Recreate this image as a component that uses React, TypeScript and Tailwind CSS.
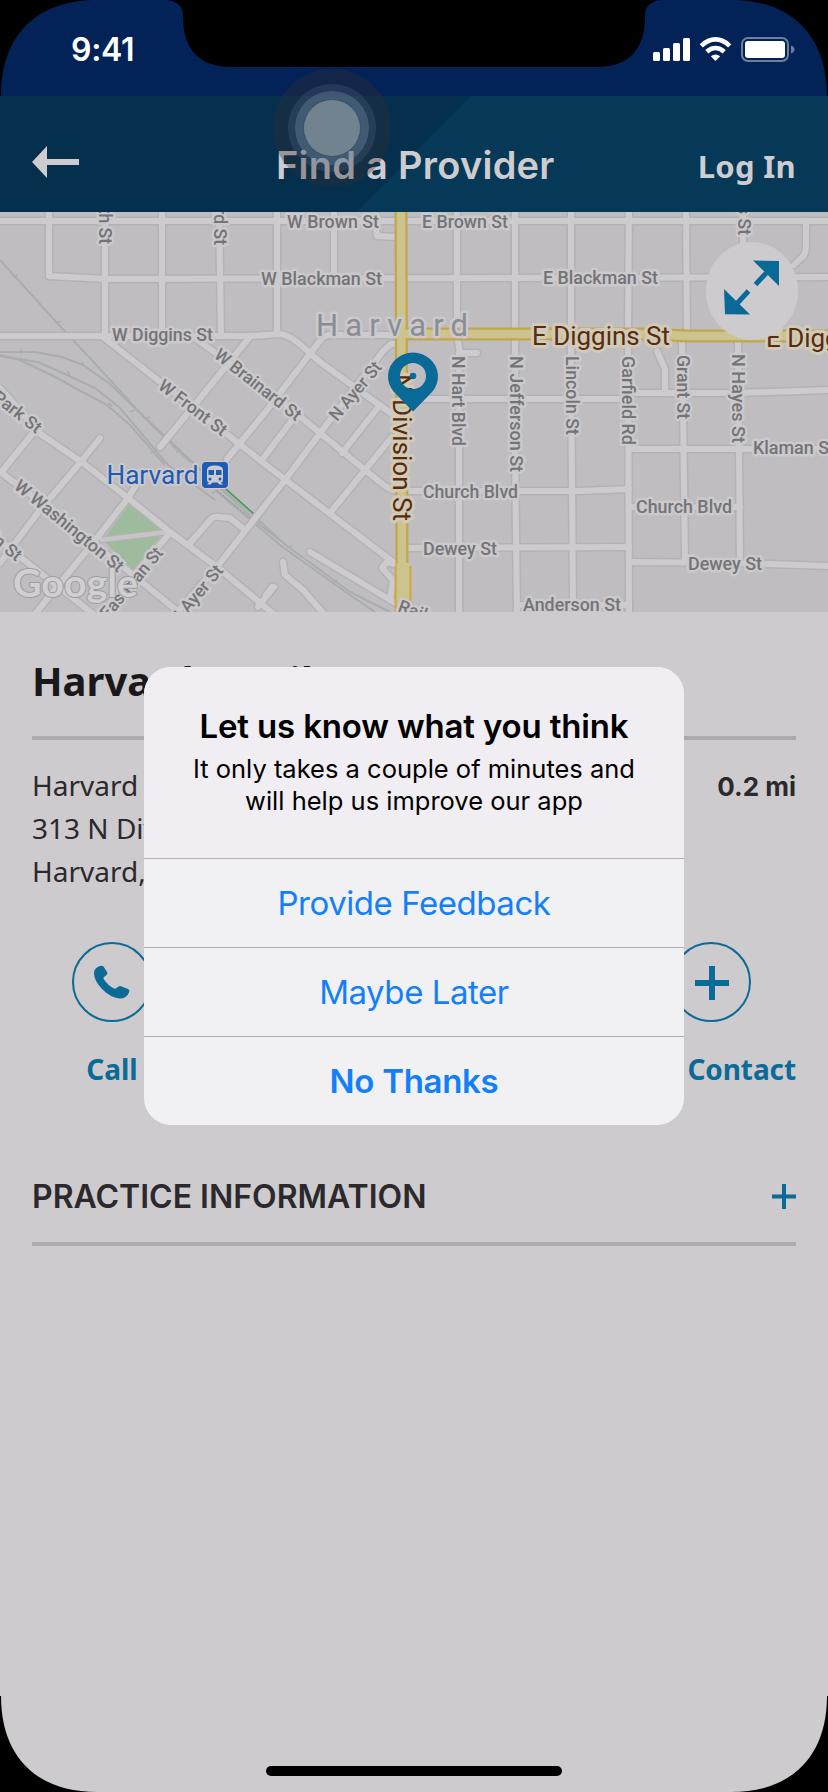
import React from "react";

const UI = "font-[Inter,'Liberation_Sans',sans-serif]";
const NOTO = "font-['Noto_Sans','Open_Sans',sans-serif]";

const ROADS = [
  "M0 221H828",
  "M49 205V276L107 279L828 277",
  "M105 205V336",
  "M162 205V336",
  "M219 205L221 336",
  "M277 205V334",
  "M334 205V277",
  "M0 336H250L280 334Q290 335 303 347L320 362L392 414",
  "M103 337L270 468L397 565",
  "M195 338L280 400L365 470L385 486Q392 491 402 491H580L629 489",
  "M402 335H328Q323 336 319 342L267 410L227 459",
  "M249 338L197 402L160 447",
  "M397 344H391L384 350L330 420L285 480L220 563L172 618",
  "M292 420L262 460",
  "M380 405L342 453",
  "M392 437L330 513",
  "M0 388L42 435L83 463L128 498L170 532L217 567L276 616",
  "M0 472L30 494L127 570L180 613",
  "M0 540L20 557L92 613",
  "M33 433L3 470",
  "M100 438L80 463L40 510L0 563",
  "M138 482L128 498L97 538L35 614",
  "M170 533L100 615",
  "M190 543L211 519Q214 516 219 517L230 518L245 530",
  "M274 587L258 607",
  "M283 562L285 575L303 590L324 614",
  "M272 587L266 595",
  "M310 552L402 607",
  "M397 565L387 562L382 568L393 580L390 600",
  "M375 222L377 236L397 237",
  "M457 205V335L460 353H477",
  "M459 353V614",
  "M515 205V450L517 614",
  "M571 205V360L573 605",
  "M629 205L628 335L629 614",
  "M686 205L687 335",
  "M682 342L683 405L685 562",
  "M743 205V250",
  "M738 342L740 562",
  "M806 221V246Q806 255 801 258L794 265",
  "M422 399H629",
  "M636 393H735L828 390",
  "M657 351L665 369V393",
  "M629 449H828",
  "M629 507H740",
  "M402 548L629 547",
  "M629 562L740 563L828 566",
  "M520 605H629",
];

const RAILS = [
  "M0 260L58 324L102 371L142 415L195 465L260 525L290 548L350 592L390 612",
  "M0 352H35L62 357L83 365L110 384L135 408L190 462",
  "M0 356L38 362L67 375L95 388L120 408L168 465L215 500",
  "M0 355L20 360L55 377L107 405L130 425L165 465",
  "M137 410L192 462L250 512L280 540",
  "M215 490L280 545L340 588L375 612",
];

const TICKS = "M13 277l5-2M56 323l5-2M21 349v5M82 362l3 5M52 374l4 4M108 403l4 3M67 371l3 4M130 412l5-2M145 419l5-2M150 453l6-2M176 452l5-2M288 548l4-3M332 583l5-3M212 493l5-2";

type Label = { t: string; x: number; y: number; len?: number; r?: number; end?: boolean };

const LABELS: Label[] = [
  { t: "W Diggins St", x: 112, y: 341, len: 101 },
  { t: "W Brown St", x: 287, y: 228, len: 92 },
  { t: "E Brown St", x: 422, y: 228, len: 86 },
  { t: "W Blackman St", x: 261, y: 285, len: 121 },
  { t: "E Blackman St", x: 543, y: 284, len: 115 },
  { t: "th St", x: 99, y: 244, r: 90, end: true },
  { t: "rd St", x: 214, y: 245, r: 90, end: true },
  { t: "s St", x: 738, y: 235, r: 90, end: true },
  { t: "N Hart Blvd", x: 452, y: 356, len: 90, r: 90 },
  { t: "N Jefferson St", x: 510, y: 356, len: 116, r: 90 },
  { t: "Lincoln St", x: 566, y: 356, len: 79, r: 90 },
  { t: "Garfield Rd", x: 622, y: 356, len: 89, r: 90 },
  { t: "Grant St", x: 677, y: 355, len: 64, r: 90 },
  { t: "N Hayes St", x: 732, y: 354, len: 89, r: 90 },
  { t: "Park St", x: 36, y: 434, r: 38, end: true },
  { t: "W Front St", x: 157, y: 388, len: 81, r: 37 },
  { t: "W Brainard St", x: 213, y: 357, len: 105, r: 38 },
  { t: "N Ayer St", x: 337, y: 422, len: 71, r: -50 },
  { t: "W Washington St", x: 13, y: 488, len: 135, r: 39 },
  { t: "Main St", x: 16, y: 562, r: 39, end: true },
  { t: "Eastman St", x: 108, y: 620, len: 87, r: -50 },
  { t: "N Ayer St", x: 224, y: 571, r: -50, end: true },
  { t: "Railroad St", x: 397, y: 611, r: 20 },
  { t: "Church Blvd", x: 423, y: 498, len: 95 },
  { t: "Church Blvd", x: 636, y: 513, len: 96 },
  { t: "Dewey St", x: 423, y: 555, len: 74 },
  { t: "Dewey St", x: 688, y: 570, len: 74 },
  { t: "Klaman St", x: 753, y: 454, len: 82 },
  { t: "Anderson St", x: 523, y: 611, len: 98 },
];

function StreetMap() {
  return (
    <svg width="828" height="400" viewBox="0 212 828 400" className="block shrink-0 font-[Roboto,sans-serif]">
      <rect y="212" width="828" height="400" fill="#bfbdc0" />
      <g fill="none" stroke="#abacb0" strokeWidth="2">
        {RAILS.map((d) => <path key={d} d={d} />)}
        <path d={TICKS} strokeWidth="1.5" />
      </g>
      <path d="M226 489L254 514" stroke="#3f9a53" strokeWidth="1.5" />
      <path d="M217 490L250 518" stroke="#6f8c78" strokeWidth="1" strokeDasharray="1 1" />
      <path d="M130 503L165 530L133 570L103 540Z" fill="#9fbb9e" />
      <path d="M100 540L168 532" stroke="#b3b1b4" strokeWidth="7" />
      <g fill="none" stroke="#b3b2b5" strokeWidth="9" strokeLinecap="round" strokeLinejoin="round">
        {ROADS.map((d) => <path key={d} d={d} />)}
      </g>
      <path d="M100 540L168 532" stroke="#c6c4c7" strokeWidth="4.5" />
      <g fill="none" stroke="#cdcbce" strokeWidth="6" strokeLinecap="round" strokeLinejoin="round">
        {ROADS.map((d) => <path key={d} d={d} />)}
      </g>
      <g fill="none">
        <path d="M402 334H640L690 336H828M401 205L402 568" stroke="#c3a550" strokeWidth="13" />
        <path d="M403 566V614" stroke="#c9aa4c" strokeWidth="17" />
        <path d="M402 334H640L690 336H828M401 205L402 568" stroke="#ccc48c" strokeWidth="8.5" />
        <path d="M403 563V614" stroke="#ccc48c" strokeWidth="12.5" />
      </g>
      <g fontSize="17.500" fontWeight="500" fill="#747477" stroke="#cbc9cc" strokeWidth="5" strokeLinejoin="round" style={{ paintOrder: "stroke" }}>
        {LABELS.map((l, i) => (
          <text
            key={i}
            x={l.x}
            y={l.y}
            textLength={l.len}
            lengthAdjust="spacingAndGlyphs"
            textAnchor={l.end ? "end" : "start"}
            transform={l.r ? `rotate(${l.r} ${l.x} ${l.y})` : undefined}
          >
            {l.t}
          </text>
        ))}
      </g>
      <text x="316" y="336" fontSize="31" textLength="152" fill="#8a8d94" stroke="#cbc9cc" strokeWidth="5" strokeLinejoin="round" style={{ paintOrder: "stroke" }}>Harvard</text>
      <g fontSize="25" fill="#5b2b0d" stroke="#d0cab8" strokeWidth="6" strokeLinejoin="round" style={{ paintOrder: "stroke" }}>
        <text x="532" y="344.500" textLength="138" lengthAdjust="spacingAndGlyphs">E Diggins St</text>
        <text x="766" y="346.500" textLength="138" lengthAdjust="spacingAndGlyphs">E Diggins St</text>
        <text x="393" y="374" textLength="147" lengthAdjust="spacingAndGlyphs" transform="rotate(90 393 374)">N Division St</text>
      </g>
      <text x="106.500" y="483.500" fontSize="25" textLength="92" lengthAdjust="spacingAndGlyphs" fill="#1e5bb4" stroke="#cbc9cc" strokeWidth="4" strokeLinejoin="round" style={{ paintOrder: "stroke" }}>Harvard</text>
      <g>
        <rect x="201" y="461" width="28" height="28" rx="5" fill="#cdcbce" />
        <rect x="202" y="462" width="26" height="26" rx="4" fill="#1e5bb4" />
        <path d="M207 470Q207 465.500 215 465.500T223 470V480Q223 482 221 482.500L223 484.500H219.500L217.500 482.500H212.500L210.500 484.500H207L209 482.500Q207 482 207 480Z" fill="#cdcbce" />
        <path d="M208.500 470H214V475H208.500ZM216 470H221.500V475H216Z" fill="#1e5bb4" />
        <circle cx="210" cy="479" r="1.500" fill="#1e5bb4" />
        <circle cx="220" cy="479" r="1.500" fill="#1e5bb4" />
      </g>
      <text x="13" y="597" textLength="125" lengthAdjust="spacingAndGlyphs" fontSize="39" fontWeight="700" fill="#d1cfd2" stroke="#9e9da0" strokeWidth="2" strokeLinejoin="round" style={{ paintOrder: "stroke" }} className="font-[Lato,sans-serif]">Google</text>
      <path
        fillRule="evenodd"
        fill="#096a97"
        d="M413 411.500L393.500 391.500A25 24 0 1 1 432.500 391.500ZM413 363A13 13 0 1 0 413 389A13 13 0 1 0 413 363Z"
      />
      <circle cx="413" cy="376" r="3.300" fill="#096a97" />
      <ellipse cx="752" cy="291" rx="46" ry="49" fill="#cdcbce" />
      <g fill="#096a97">
        <path d="M753 260.500L779 261V286Z" />
        <path d="M724 289L725 314.300L750 314.500Z" />
        <path d="M755.500 284.500L771 268M737 303.500L748.500 291" stroke="#096a97" strokeWidth="5" />
      </g>
    </svg>
  );
}

function StatusBar() {
  return (
    <div className="flex h-24 shrink-0 items-start justify-between bg-[#032358] pt-[30px] pr-[33px] pl-[71px] text-white">
      <span className={`${UI} text-[32px] leading-10 font-semibold tracking-[-0.3px]`}>9:41</span>
      <svg width="144" height="28" viewBox="651 35 144 28" className="mt-[5px]" fill="#fff">
        <rect x="653" y="52" width="7" height="9" rx="1.500" />
        <rect x="663" y="48" width="7" height="13" rx="1.500" />
        <rect x="673" y="43" width="7" height="18" rx="1.500" />
        <rect x="683" y="38" width="7" height="23" rx="1.500" />
        <g fill="none" stroke="#fff" strokeWidth="4.600">
          <path d="M701.300 45.800Q708 39.400 715.500 39.400T729.700 45.800" />
          <path d="M706.800 51.700Q710.800 48 715.500 48T724.200 51.700" />
        </g>
        <path d="M710.800 56.300Q715.500 52.800 720.200 56.300L715.500 61Z" />
        <rect x="742" y="38" width="46" height="23" rx="6" fill="none" stroke="#fff" strokeOpacity=".42" strokeWidth="2" />
        <rect x="745" y="41" width="40" height="17" rx="3" />
        <path d="M791 45.500Q794.500 47 794.500 49.500T791 53.500Z" fillOpacity=".42" />
      </svg>
    </div>
  );
}

function Header() {
  return (
    <header className="relative flex h-[116px] shrink-0 items-center justify-between bg-[linear-gradient(134.5deg,#042f4d_50%,#063857_50%)] pt-6 pr-8 pl-8 text-[#cfccd0]">
      <svg width="48" height="34" viewBox="0 0 48 34" className="-mt-2" fill="#cfccd0">
        <path d="M0 17L15 1V14H47V20H15V33Z" />
      </svg>
      <h1 className={`${UI} -mt-[2px] ml-[53px] text-[38px] leading-[46px] font-semibold tracking-[0.25px]`}>Find a Provider</h1>
      <span className={`${NOTO} text-[31px] leading-10 font-bold tracking-[0.3px]`}>Log In</span>
    </header>
  );
}

function Alert() {
  return (
    <div className={`${UI} absolute top-[667px] left-[144px] flex w-[540px] flex-col overflow-hidden rounded-[27px] bg-[#f1f1f4] text-center`}>
      <div className="h-[191px] bg-[#f0eef2] pt-[39px]">
        <h2 className="text-[33px] leading-10 font-semibold tracking-[-0.16px] text-black">Let us know what you think</h2>
        <p className="mt-[7px] text-[25.500px] leading-8 text-black">
          It only takes a couple of minutes and
          <br />
          will help us improve our app
        </p>
      </div>
      <button className="h-[89px] border-t border-[#aeadb2] text-[33px] leading-10 tracking-[-0.45px] text-[#137ffa]">Provide Feedback</button>
      <button className="h-[89px] border-t border-[#aeadb2] text-[33px] leading-10 tracking-[-0.45px] text-[#137ffa]">Maybe Later</button>
      <button className="h-[89px] border-t border-[#aeadb2] text-[33px] leading-10 font-semibold tracking-[-0.3px] text-[#137ffa]">No Thanks</button>
    </div>
  );
}

function DeviceFrame() {
  return (
    <svg width="828" height="1792" viewBox="0 0 828 1792" className="pointer-events-none absolute inset-0">
      <path d="M0 0H97C36 0 1 36 1 96H0Z" />
      <path d="M828 0H731C792 0 827 36 827 96H828Z" />
      <path d="M0 1792H97C36 1792 1 1756 1 1696H0Z" />
      <path d="M828 1792H731C792 1792 827 1756 827 1696H828Z" />
      <path d="M166 0C178 1 183 6 183 17C183 48 198 67 231 67H597C630 67 645 48 645 17C645 6 650 1 662 0Z" />
      <rect x="266" y="1766" width="296" height="10" rx="5" />
    </svg>
  );
}

function TouchIndicator() {
  return (
    <div className="absolute top-[69px] left-[273px] flex size-[118px] items-center justify-center rounded-full bg-[radial-gradient(circle,rgba(50,45,50,0.35)_80%,rgba(50,45,50,0.2)_100%)] bg-clip-border">
      <div className="flex size-[88px] items-center justify-center rounded-full bg-[rgba(130,150,185,0.16)]">
        <div className="flex size-[74px] items-center justify-center rounded-full bg-[rgba(130,155,175,0.3)]">
          <div className="size-[58px] rounded-full border border-[#3a5068] bg-[#70838f]" />
        </div>
      </div>
    </div>
  );
}

export default function App() {
  return (
    <div className="relative flex h-[1792px] w-[828px] flex-col overflow-hidden bg-[#cdcbce]">
      <StatusBar />
      <Header />
      <StreetMap />
      <main className={`${NOTO} flex flex-col px-8 pt-[41px] text-[#2b292c]`}>
        <h2 className="border-b-4 border-[#adacac] pb-[27px] text-[40px] leading-[56px] font-bold text-[#1a181b]">Harvard Family</h2>
        <div className="mt-6 flex items-start justify-between">
          <address className="text-[28px] leading-[43px] not-italic">
            Harvard
            <br />
            313 N Division St
            <br />
            Harvard, IL
          </address>
          <span className={`${UI} mt-[1px] text-[26px] leading-[43px] font-bold`}>0.2 mi</span>
        </div>
        <div className="mt-[49px] flex justify-between pl-10 text-[28px] leading-10 font-bold text-[#0b6a96]">
          <div className="flex flex-col items-center gap-[27px]">
            <div className="flex size-20 items-center justify-center rounded-full border-2 border-[#0b6a96]">
              <svg width="36" height="34" viewBox="0 0 36 34" fill="#0b6a96">
                <path d="M3 2.500Q7-.5 9.500 1.500L13 7Q14 8.500 12.500 10L10 12Q9 13 10 14.500Q14 20.500 20 23.500Q21.500 24 22.500 23L24.500 21.500Q26 20.500 27.500 21.500L34 24Q36 25 35 27.500Q32.500 33.500 26 33.500Q17 33 8.500 24.500T0 8Q0 4.500 3 2.500Z" />
              </svg>
            </div>
            <span>Call</span>
          </div>
          <div className="flex flex-col items-center gap-[27px]">
            <div className="flex size-20 items-center justify-center rounded-full border-2 border-[#0b6a96]">
              <svg width="34" height="34" viewBox="0 0 34 34" className="mt-[2px] ml-[2px]">
                <path d="M17 0V34M0 17H34" stroke="#0b6a96" strokeWidth="6" />
              </svg>
            </div>
            <span className="tracking-[-0.1px]">Add Contact</span>
          </div>
        </div>
        <div className="mt-[88px] flex items-center justify-between border-b-4 border-[#adacac] pb-[25px]">
          <h3 className={`${UI} text-[32px] leading-10 font-semibold`}>PRACTICE INFORMATION</h3>
          <svg width="24" height="26" viewBox="0 0 24 26">
            <path d="M12 0V25M0 12.500H24" stroke="#0b6a96" strokeWidth="4" />
          </svg>
        </div>
      </main>
      <TouchIndicator />
      <Alert />
      <DeviceFrame />
    </div>
  );
}
